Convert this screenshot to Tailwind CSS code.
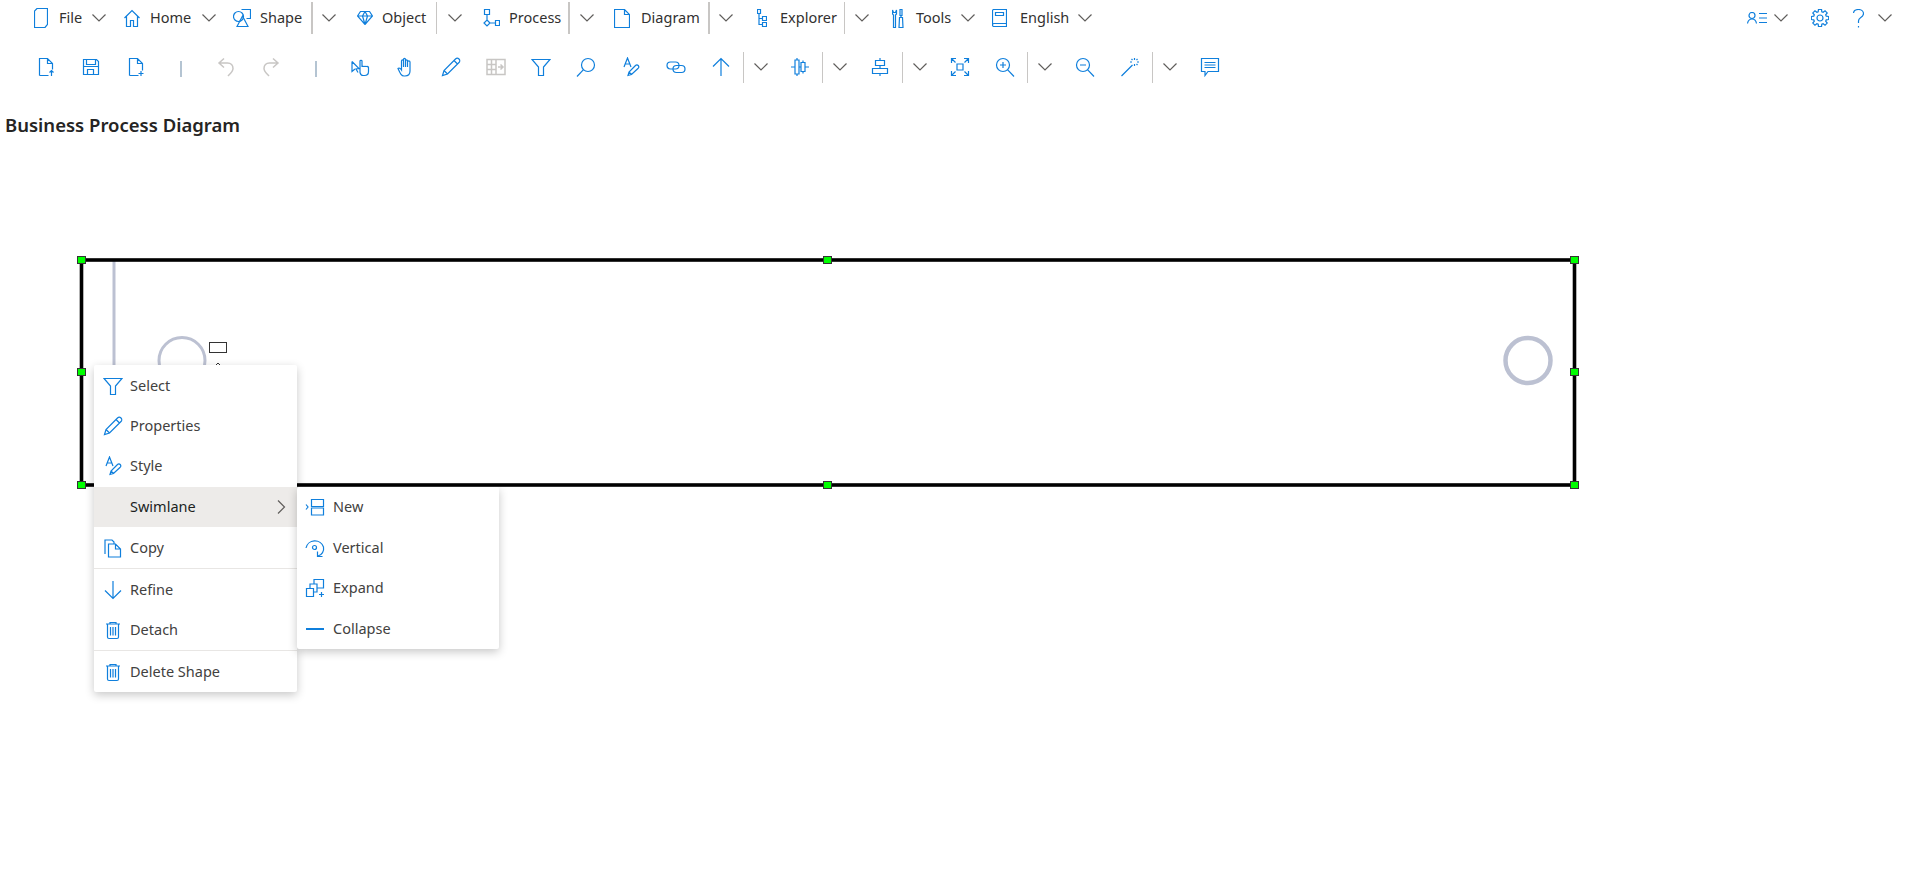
<!DOCTYPE html>
<html lang="en">
<head>
  <meta charset="UTF-8" />
  <title>Business Process Diagram</title>
  <script src="https://cdn.jsdelivr.net/npm/@tailwindcss/browser@4"></script>
</head>
<body class="relative h-[892px] overflow-hidden bg-white font-['Noto_Sans',sans-serif] text-[14.5px] text-[#323130]">
  <!-- shared icons -->
  <svg class="hidden">
    <symbol id="chev" viewBox="0 0 14 14"><path d="M.5 3.500 7 10l6.500-6.500" /></symbol>
    <symbol id="funnel" viewBox="0 0 20 20"><path d="M1 2.500h18l-6.500 7.500v8.500h-5V10z" /></symbol>
    <symbol id="pencil" viewBox="0 0 20 20"><path d="M1.500 18.500l1.500-5L14.500 2c1-1 2.500-1 3.500 0s1 2.500 0 3.500L6.500 17zM3 13.500 6.500 17M13 3.500 16.500 7" /></symbol>
    <symbol id="style" viewBox="0 0 20 20"><path d="M3 10 6.500 1 10 10M4.200 7h4.600M7 18.500l1-3.500 6.500-6.500c.8-.8 2-.8 2.700 0s.7 2 0 2.700L10.500 17.500zM8 15l2.500 2.500" /></symbol>
    <symbol id="trash" viewBox="0 0 20 20"><path d="M3 4h14M7 4V2.500h6V4M4.500 4v13c0 1 .5 1.500 1.500 1.500h8c1 0 1.500-.5 1.500-1.500V4M7.500 7v8.500M10 7v8.500M12.500 7v8.500" /></symbol>
    <symbol id="zoom" viewBox="0 0 20 20"><circle cx="8" cy="8" r="6.500" /><path d="M12.500 12.700 19 19.500M5 8h6" /></symbol>
  </svg>

  <!-- menu bar -->
  <nav class="flex h-[36px] items-center pl-[34px] pr-[23px] fill-none stroke-[#0f7fdc] stroke-[length:1.2px]">
    <svg class="h-[20px] w-[14px]" viewBox="0 0 14 20"><path d="M3 .5h10.500v16L11 19.500H.5V3z" /></svg>
    <span class="ml-[11px] w-[33px]">File</span>
    <svg class="h-[14px] w-[14px] stroke-[#605e5c]"><use href="#chev" /></svg>

    <svg class="ml-[18px] h-[18px] w-[16px]" viewBox="0 0 16 18"><path d="M.5 9 8 1.500 15.500 9M2.500 7.500v10h4v-6h3v6h4v-10" /></svg>
    <span class="ml-[10px] w-[52px]">Home</span>
    <svg class="h-[14px] w-[14px] stroke-[#605e5c]"><use href="#chev" /></svg>

    <svg class="ml-[17px] h-[18px] w-[18px]" viewBox="0 0 18 18"><circle cx="5.500" cy="7.500" r="5" /><path d="M8.500 .5h9v9h-4M9.500 7 15 17.500H4z" /></svg>
    <span class="ml-[9px] w-[51px]">Shape</span>
    <div class="h-[32px] w-[2px] bg-[#c8c6c4]"></div>
    <svg class="ml-[9px] h-[14px] w-[14px] stroke-[#605e5c]"><use href="#chev" /></svg>

    <svg class="ml-[21px] h-[14px] w-[16px]" viewBox="0 0 16 14"><path d="M3.500.5h9l3 4.500L8 13.500.5 5zM.5 5h15M5.500 5 8 13.500 10.500 5M5.500 5l2.500-4.500L10.500 5" /></svg>
    <span class="ml-[9px] w-[54px]">Object</span>
    <div class="h-[32px] w-px bg-[#c8c6c4]"></div>
    <svg class="ml-[11px] h-[14px] w-[14px] stroke-[#605e5c]"><use href="#chev" /></svg>

    <svg class="ml-[21px] h-[18px] w-[17px]" viewBox="0 0 17 18"><path d="M1.500.5h5v5h-5zM4 5.500v5.500M4 11l3 3-3 3-3-3zM7 14h5.500M12.500 11.500h4v5h-4z" /></svg>
    <span class="ml-[9px] w-[59px]">Process</span>
    <div class="h-[32px] w-[2px] bg-[#c8c6c4]"></div>
    <svg class="ml-[10px] h-[14px] w-[14px] stroke-[#605e5c]"><use href="#chev" /></svg>

    <svg class="ml-[20px] h-[19px] w-[16px]" viewBox="0 0 16 19"><path d="M.5.500h10l5 5v13H.5zM10.500.500v5h5" /></svg>
    <span class="ml-[11px] w-[67px]">Diagram</span>
    <div class="h-[32px] w-[2px] bg-[#c8c6c4]"></div>
    <svg class="ml-[9px] h-[14px] w-[14px] stroke-[#605e5c]"><use href="#chev" /></svg>

    <svg class="ml-[24px] h-[18px] w-[10px]" viewBox="0 0 10 18"><path d="M.5.500h3v4h-3zM2 4.500v11h3.500M2 9.500h3.500M5.500 7.500h4v4h-4zM5.500 13.500h4v4h-4z" /></svg>
    <span class="ml-[13px] w-[64px]">Explorer</span>
    <div class="h-[32px] w-px bg-[#c8c6c4]"></div>
    <svg class="ml-[10px] h-[14px] w-[14px] stroke-[#605e5c]"><use href="#chev" /></svg>

    <svg class="ml-[23px] h-[19px] w-[12px]" viewBox="0 0 12 19"><path d="M.5 1v4l1 1v12.500h2V6l1-1V1l-1 2.500h-2zM8 .5h2v6H8zM9 6.500v2M7.500 8.500h3l.5 10H7z" /></svg>
    <span class="ml-[12px] w-[45px]">Tools</span>
    <svg class="h-[14px] w-[14px] stroke-[#605e5c]"><use href="#chev" /></svg>

    <svg class="ml-[17px] h-[18px] w-[15px]" viewBox="0 0 15 18"><path d="M.5 15.500V2C.5 1 1 .5 2 .5h12.500v17H2c-1 0-1.500-.7-1.500-1.500s.5-1.500 1.500-1.500h12.500M3.500 3.500h8v3h-8z" /></svg>
    <span class="ml-[13px] w-[58px]">English</span>
    <svg class="h-[14px] w-[14px] stroke-[#605e5c]"><use href="#chev" /></svg>

    <svg class="ml-auto h-[12px] w-[20px]" viewBox="0 0 20 12"><circle cx="5" cy="3.500" r="3" /><path d="M.5 11.500C1 8.500 3 7 5 7s4 1.500 4.500 4.500M12 1.500h8M12 6h8M12 10.500h8" /></svg>
    <svg class="ml-[7px] h-[14px] w-[14px] stroke-[#605e5c]"><use href="#chev" /></svg>
    <svg class="ml-[23px] h-[18px] w-[18px]" viewBox="-9 -9 18 18"><circle r="3" /><polygon points="-1.790,-6.250 -1.530,-8.670 1.530,-8.670 1.790,-6.250 3.150,-5.680 5.050,-7.210 7.210,-5.050 5.680,-3.150 6.250,-1.790 8.670,-1.530 8.670,1.530 6.250,1.790 5.680,3.150 7.210,5.050 5.050,7.210 3.150,5.680 1.790,6.250 1.530,8.670 -1.530,8.670 -1.790,6.250 -3.150,5.680 -5.050,7.210 -7.210,5.050 -5.680,3.150 -6.250,1.790 -8.670,1.530 -8.670,-1.530 -6.250,-1.790 -5.680,-3.150 -7.210,-5.050 -5.050,-7.210 -3.150,-5.680" /></svg>
    <svg class="ml-[24px] h-[19px] w-[11px]" viewBox="0 0 11 19"><path d="M.5 4C.8 1.800 2.800.5 5.500.5c2.800 0 5 1.700 5 4.200 0 2-1.300 3-3 4-1.300.8-2 1.700-2 3.300v2M5.500 17v1.500" /></svg>
    <svg class="ml-[14px] h-[14px] w-[14px] stroke-[#605e5c]"><use href="#chev" /></svg>
  </nav>

  <!-- command bar -->
  <div class="flex h-[62px] items-center pl-[23px] fill-none stroke-[#0f7fdc] stroke-[length:1.2px]">
    <div class="flex w-[45px] justify-center"><svg class="h-5 w-5" viewBox="0 0 20 20"><path d="M3.500 18.500V1.500h8l5 5v6M11.500 1.500v5h5M3.500 18.500h9M15.500 19v-5.500M13.500 15.500l2-2 2 2" /></svg></div>
    <div class="flex w-[45px] justify-center"><svg class="h-5 w-5" viewBox="0 0 20 20"><path d="M2.500 2.500h13l2 2v13h-15zM5.500 2.500v5h9v-5M2.500 9.500h15M6.500 17.500v-5h6v5" /></svg></div>
    <div class="flex w-[45px] justify-center"><svg class="h-5 w-5" viewBox="0 0 20 20"><path d="M3.500 18.500V1.500h8l5 5v7M11.500 1.500v5h5M3.500 18.500h9M15 14v5M12.500 16.500h5" /></svg></div>
    <div class="flex w-[45px] justify-center"><div class="mt-[3px] h-[16px] w-[2px] bg-[#b4c4d2]"></div></div>
    <div class="flex w-[45px] justify-center"><svg class="h-5 w-5 stroke-[#c8c6c4] stroke-[length:1.500px]" viewBox="0 0 20 20"><path d="M8 1.500 3 6l5 4.500M3 6h8.500c3.500 0 5.500 2.500 5.500 5.500 0 3-2.500 5-5 7.500" /></svg></div>
    <div class="flex w-[45px] justify-center"><svg class="h-5 w-5 stroke-[#c8c6c4] stroke-[length:1.500px]" viewBox="0 0 20 20"><path d="M12 1.500 17 6l-5 4.500M17 6H8.500C5 6 3 8.500 3 11.500c0 3 2.500 5 5 7.500" /></svg></div>
    <div class="flex w-[45px] justify-center"><div class="mt-[3px] h-[16px] w-[2px] bg-[#b4c4d2]"></div></div>
    <div class="flex w-[45px] justify-center"><svg class="h-5 w-5" viewBox="0 0 20 20"><path d="M1 4.500 8 11.500 5 12l2 3.500M1 4.500v10l3-2.500M9 16V4c0-1 2-1 2 0v6c0-1 2-1 2 0 0-1 2-1 2 0 0-.8 2.500-1 2.500.5v4c0 2.500-1.500 4-4 4H12c-1.500 0-2.500-1-3-3z" /></svg></div>
    <div class="flex w-[45px] justify-center"><svg class="h-5 w-5" viewBox="0 0 20 20"><path d="M2 11.500c1-1 2.500 0 3.500 1.500V4c0-1.500 2-1.500 2 0V2.500c0-1.500 2-1.500 2 0V4c0-1.500 2-1.500 2 0v1c0-1.500 2.500-1.500 2.500 0v9c0 3-2 5-5 5H8c-2.500 0-3.500-2-6-7.500zM7.500 4v6M9.500 3v7M11.500 4v6" /></svg></div>
    <div class="flex w-[45px] justify-center"><svg class="h-5 w-5"><use href="#pencil" /></svg></div>
    <div class="flex w-[45px] justify-center"><svg class="h-5 w-5 stroke-[#c8c6c4] stroke-[length:1.500px]" viewBox="0 0 20 20"><path d="M1 2.500h18v15H1zM1 7.500h9M1 12.500h9M5.500 2.500v15M10 2.500v15M12 10h5M14.500 7.500 17 10l-2.500 2.500" /></svg></div>
    <div class="flex w-[45px] justify-center"><svg class="h-5 w-5"><use href="#funnel" /></svg></div>
    <div class="flex w-[45px] justify-center"><svg class="h-5 w-5" viewBox="0 0 20 20"><circle cx="12" cy="8" r="6.500" /><path d="M7.500 12.700 1 19.500" /></svg></div>
    <div class="flex w-[45px] justify-center"><svg class="h-5 w-5"><use href="#style" /></svg></div>
    <div class="flex w-[45px] justify-center"><svg class="h-5 w-5" viewBox="0 0 20 20"><rect x="1" y="5" width="12" height="7" rx="3.500" /><rect x="7" y="8.500" width="12" height="7" rx="3.500" /></svg></div>
    <div class="flex w-[45px] justify-center"><svg class="h-5 w-5" viewBox="0 0 20 20"><path d="M10 19V1.500M2 9.500l8-8 8 8" /></svg></div>
    <div class="h-[31px] w-px bg-[#c8c6c4]"></div>
    <div class="flex w-[33px] justify-center"><svg class="h-[14px] w-[14px] stroke-[#605e5c]"><use href="#chev" /></svg></div>
    <div class="flex w-[45px] justify-center"><svg class="h-5 w-5" viewBox="0 0 20 20"><path d="M1 10h4M9 10h2M15 10h4M5 3h4v14H5zM11 5.500h4v9h-4zM7 1v2M7 17v2M13 3.500v2M13 14.500v2" /></svg></div>
    <div class="h-[31px] w-px bg-[#c8c6c4]"></div>
    <div class="flex w-[34px] justify-center"><svg class="h-[14px] w-[14px] stroke-[#605e5c]"><use href="#chev" /></svg></div>
    <div class="flex w-[45px] justify-center"><svg class="h-5 w-5" viewBox="0 0 20 20"><path d="M10 1v2.500M10 8.500v3M10 16.500V19M5.500 3.500h9v5h-9zM2.500 11.500h15v5h-15z" /></svg></div>
    <div class="h-[31px] w-px bg-[#c8c6c4]"></div>
    <div class="flex w-[34px] justify-center"><svg class="h-[14px] w-[14px] stroke-[#605e5c]"><use href="#chev" /></svg></div>
    <div class="flex w-[45px] justify-center"><svg class="h-5 w-5" viewBox="0 0 20 20"><path d="M7 7h6v6H7zM1.500 6V1.500H6M14 1.500h4.500V6M1.500 14v4.500H6M14 18.500h4.500V14M2 2l3.500 3.500M18 2l-3.500 3.500M2 18l3.500-3.500M18 18l-3.500-3.500" /></svg></div>
    <div class="flex w-[45px] justify-center"><svg class="h-5 w-5" viewBox="0 0 20 20"><circle cx="8" cy="8" r="6.500" /><path d="M12.500 12.700 19 19.500M5 8h6M8 5v6" /></svg></div>
    <div class="h-[31px] w-px bg-[#c8c6c4]"></div>
    <div class="flex w-[34px] justify-center"><svg class="h-[14px] w-[14px] stroke-[#605e5c]"><use href="#chev" /></svg></div>
    <div class="flex w-[45px] justify-center"><svg class="h-5 w-5"><use href="#zoom" /></svg></div>
    <div class="flex w-[45px] justify-center"><svg class="h-5 w-5" viewBox="0 0 20 20"><path d="M1.500 19 12.500 8M14.500 1v2M14.500 7v2M10 5h2M17 5h2M11.500 2l1 1M17.500 2l-1 1M17.500 8l-1-1" /></svg></div>
    <div class="h-[31px] w-px bg-[#c8c6c4]"></div>
    <div class="flex w-[34px] justify-center"><svg class="h-[14px] w-[14px] stroke-[#605e5c]"><use href="#chev" /></svg></div>
    <div class="flex w-[45px] justify-center"><svg class="h-5 w-5" viewBox="0 0 20 20"><path d="M1.500 1.500h17v13H8L5 18.500v-4H1.500zM4.500 5.500h11M4.500 8h11M4.500 10.500h11" /></svg></div>
  </div>

  <h1 class="pl-[5px] pt-[15px] text-[18.500px] leading-[24px] font-semibold text-[#252423]">Business Process Diagram</h1>

  <!-- diagram canvas -->
  <svg class="absolute left-0 top-0 h-[892px] w-[1915px]" viewBox="0 0 1915 892" fill="none">
    <path d="M114 261v110" stroke="#bcc1d2" stroke-width="3" />
    <circle cx="182" cy="360.500" r="23" stroke="#bcc1d2" stroke-width="3" />
    <rect x="209.500" y="342.500" width="17" height="10" stroke="#333" />
    <path d="M215 366l3-3 3 3" stroke="#333" />
    <circle cx="1528" cy="360.500" r="22.500" stroke="#bcc1d2" stroke-width="4.500" />
    <rect x="81.500" y="260" width="1493" height="225" stroke="#000" stroke-width="3.600" />
    <g fill="#00ff00" stroke="#333">
      <rect x="77.500" y="256.500" width="8" height="7" />
      <rect x="823.500" y="256.500" width="8" height="7" />
      <rect x="1570.500" y="256.500" width="8" height="7" />
      <rect x="77.500" y="368.500" width="8" height="7" />
      <rect x="1570.500" y="368.500" width="8" height="7" />
      <rect x="77.500" y="481.500" width="8" height="7" />
      <rect x="823.500" y="481.500" width="8" height="7" />
      <rect x="1570.500" y="481.500" width="8" height="7" />
    </g>
  </svg>

  <!-- context menu -->
  <div class="absolute left-[94px] top-[365px] w-[203px] rounded-[2px] bg-white text-[#424140] shadow-[0_3px_10px_rgba(0,0,0,0.22)] fill-none stroke-[#0f7fdc] stroke-[length:1.2px]">
    <div class="flex h-[41px] items-center pl-[9px]"><svg class="h-[20px] w-[20px]"><use href="#funnel" /></svg><span class="ml-[7px]">Select</span></div>
    <div class="flex h-[40px] items-center pl-[9px]"><svg class="h-[20px] w-[20px]"><use href="#pencil" /></svg><span class="ml-[7px]">Properties</span></div>
    <div class="flex h-[41px] items-center pb-[1px] pl-[9px]"><svg class="h-[20px] w-[20px]"><use href="#style" /></svg><span class="ml-[7px]">Style</span></div>
    <div class="flex h-[40px] items-center bg-[#edebe9] pl-[36px] pr-[11px] text-[#201f1e]"><span>Swimlane</span><svg class="ml-auto h-[14px] w-[9px] stroke-[#605e5c]" viewBox="0 0 9 14"><path d="M1 .5 7.500 7 1 13.500" /></svg></div>
    <div class="flex h-[41px] items-center pl-[9px]"><svg class="h-[20px] w-[20px]" viewBox="0 0 20 20"><path d="M2 16V2h7l2 2v2M5.500 6h7l5 5v8h-12zM12.500 6v5h5" /></svg><span class="ml-[7px]">Copy</span></div>
    <div class="h-px bg-[#e8e6e4]"></div>
    <div class="flex h-[41px] items-center pl-[9px]"><svg class="h-[20px] w-[20px]" viewBox="0 0 20 20"><path d="M10 1v17.500M2 10.500l8 8 8-8" /></svg><span class="ml-[7px]">Refine</span></div>
    <div class="flex h-[40px] items-center pb-[1px] pl-[9px]"><svg class="h-[20px] w-[20px]"><use href="#trash" /></svg><span class="ml-[7px]">Detach</span></div>
    <div class="h-px bg-[#e8e6e4]"></div>
    <div class="flex h-[41px] items-center pl-[9px]"><svg class="h-[20px] w-[20px]"><use href="#trash" /></svg><span class="ml-[7px]">Delete Shape</span></div>
  </div>

  <!-- swimlane submenu -->
  <div class="absolute left-[297px] top-[487px] w-[202px] rounded-[2px] bg-white text-[#424140] shadow-[0_3px_10px_rgba(0,0,0,0.22)] fill-none stroke-[#0f7fdc] stroke-[length:1.2px]">
    <div class="flex h-[40px] items-center pl-[8px]"><svg class="h-[20px] w-[20px]" viewBox="0 0 20 20"><path d="M1 7.500 3 10l-2 2.500M6.500 2.500h12v7h-12zM6.500 11h12v7h-12z" /></svg><span class="ml-[8px]">New</span></div>
    <div class="flex h-[41px] items-center pl-[8px]"><svg class="h-[20px] w-[20px]" viewBox="0 0 20 20"><path d="M1 10a9 8.500 0 0 1 17.500-1c.8 4-1.500 8-5.500 9M12.500 13.500V18.500h5" /><circle cx="9.500" cy="9.500" r="2" /></svg><span class="ml-[8px]">Vertical</span></div>
    <div class="flex h-[40px] items-center pl-[8px]"><svg class="h-[20px] w-[20px]" viewBox="0 0 20 20"><path d="M1.500 10.500h7v8h-7zM5 10.500V6h7v8H8.500M9 6V1.500h9.500V10H12M14 16.500h5M16.500 14v5" /></svg><span class="ml-[8px]">Expand</span></div>
    <div class="flex h-[41px] items-center pl-[8px]"><svg class="h-[20px] w-[20px]" viewBox="0 0 20 20"><path d="M1 10h18" stroke-width="2" /></svg><span class="ml-[8px]">Collapse</span></div>
  </div>
</body>
</html>
